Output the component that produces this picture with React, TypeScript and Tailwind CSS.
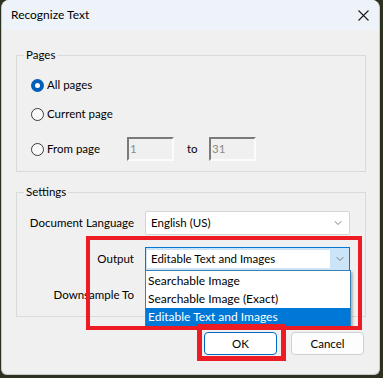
import { ChevronDown } from "lucide-react"

function Radio({ checked, label }: { checked?: boolean; label: string }) {
  return (
    <div className="flex items-center h-[20px]">
      {checked ? (
        <span className="w-[13px] h-[13px] rounded-full bg-[#005fb8] flex items-center justify-center">
          <span className="w-[5px] h-[5px] rounded-full bg-white" />
        </span>
      ) : (
        <span className="w-[13px] h-[13px] rounded-full border border-[#3b3b3b] bg-[#fafafa]" />
      )}
      <span className="ml-[3px]">{label}</span>
    </div>
  )
}

function PageInput({ value }: { value: string }) {
  return (
    <div className="w-[47px] h-[24px] border-2 border-t-[#7a7a7a] border-l-[#7a7a7a] border-b-[#fbfbfb] border-r-[#fbfbfb] bg-[#f0f0f0] text-[#8a8a8a] leading-[20px] pl-[1px]">
      {value}
    </div>
  )
}

export default function App() {
  return (
    <div
      className="relative w-[383px] h-[378px] overflow-hidden bg-[#2d3220] text-[11.5px] text-black"
      style={{ fontFamily: 'Lato, "Noto Sans", sans-serif' }}
    >
      <div className="ml-[1px] w-[379px] h-[375px] rounded-t-[8px] rounded-b-[6px] overflow-hidden bg-[#f0f0f0] border border-[#c8c8c8] border-t-0 flex flex-col">
        {/* title bar */}
        <div className="h-[30px] bg-[#eef3f9] flex items-center justify-between pl-[9px] pr-[9px]">
          <span className="text-[12px]">Recognize Text</span>
          <svg width="11" height="11" viewBox="0 0 11 11" className="mr-[1px]">
            <path d="M0.5 0.5 L10.5 10.5 M10.5 0.5 L0.5 10.5" stroke="#1a1a1a" strokeWidth="1.1" />
          </svg>
        </div>

        {/* pages */}
        <div className="relative ml-[14px] mt-[25px] w-[350px] h-[117px] border border-[#dadada]">
          <span className="absolute -top-[10px] left-[7px] px-[2px] bg-[#f0f0f0]">Pages</span>
          <div className="pl-[14px] pt-[19px] flex flex-col">
            <Radio checked label="All pages" />
            <div className="mt-[9px]">
              <Radio label="Current page" />
            </div>
            <div className="mt-[13px] flex items-center h-[24px]">
              <div className="w-[96px]">
                <Radio label="From page" />
              </div>
              <PageInput value="1" />
              <span className="ml-[13px] w-[22px]">to</span>
              <PageInput value="31" />
            </div>
          </div>
        </div>

        {/* settings */}
        <div className="relative ml-[14px] mt-[20px] w-[350px] h-[125px] border border-[#dadada]">
          <span className="absolute -top-[10px] left-[7px] px-[2px] bg-[#f0f0f0]">Settings</span>
          <div className="pt-[18px] flex flex-col gap-[12px]">
            <div className="flex items-center">
              <span className="w-[117px] text-right whitespace-nowrap">Document Language</span>
              <div className="ml-[11px] w-[205px] h-[24px] bg-white border border-[#d5d5d5] rounded-[2px] flex items-center justify-between pl-[5px] pr-[5px]">
                <span>English (US)</span>
                <ChevronDown size={12} strokeWidth={1.5} className="text-[#555]" />
              </div>
            </div>
            <div className="flex items-center">
              <span className="w-[117px] text-right">Output</span>
              <div className="ml-[11px] w-[205px] h-[24px] bg-[#cce4f7] border border-[#0078d7] flex pt-[2px] pb-[2px] pl-[1px]">
                <div className="flex-1 bg-white flex items-center pl-[4px]">Editable Text and Images</div>
                <div className="w-[19px] flex items-center justify-center">
                  <ChevronDown size={12} strokeWidth={1.5} className="text-[#555]" />
                </div>
              </div>
            </div>
            <div className="flex items-center">
              <span className="w-[117px] text-right">Downsample To</span>
              <div className="ml-[11px] w-[205px] h-[24px] bg-white border border-[#d5d5d5]" />
            </div>
          </div>
        </div>

        {/* buttons */}
        <div className="mt-[15px] flex justify-end gap-[14px] pr-[15px]">
          <button className="w-[73px] h-[23px] rounded-[4px] bg-white border border-[#0067c0]">OK</button>
          <button className="w-[73px] h-[23px] rounded-[4px] bg-[#fdfdfd] border border-[#d0d0d0]">Cancel</button>
        </div>
      </div>

      {/* open dropdown list */}
      <div className="absolute left-[145px] top-[270px] w-[206px] h-[56px] bg-white border border-[#3c7fb1] shadow-[2px_2px_2px_rgba(0,0,0,0.25)] flex flex-col pt-[1px] text-[12px]">
        <div className="h-[18px] flex items-center pl-[2px]">Searchable Image</div>
        <div className="h-[18px] flex items-center pl-[2px]">Searchable Image (Exact)</div>
        <div className="h-[18px] flex items-center pl-[2px] bg-[#0078d7] text-white">Editable Text and Images</div>
      </div>

      {/* annotation boxes */}
      <div className="absolute left-[86px] top-[236px] w-[276px] h-[94px] border-4 border-[#ed1c24]" />
      <div className="absolute left-[197px] top-[324px] w-[89px] h-[37px] border-[5px] border-[#ed1c24]" />
    </div>
  )
}
